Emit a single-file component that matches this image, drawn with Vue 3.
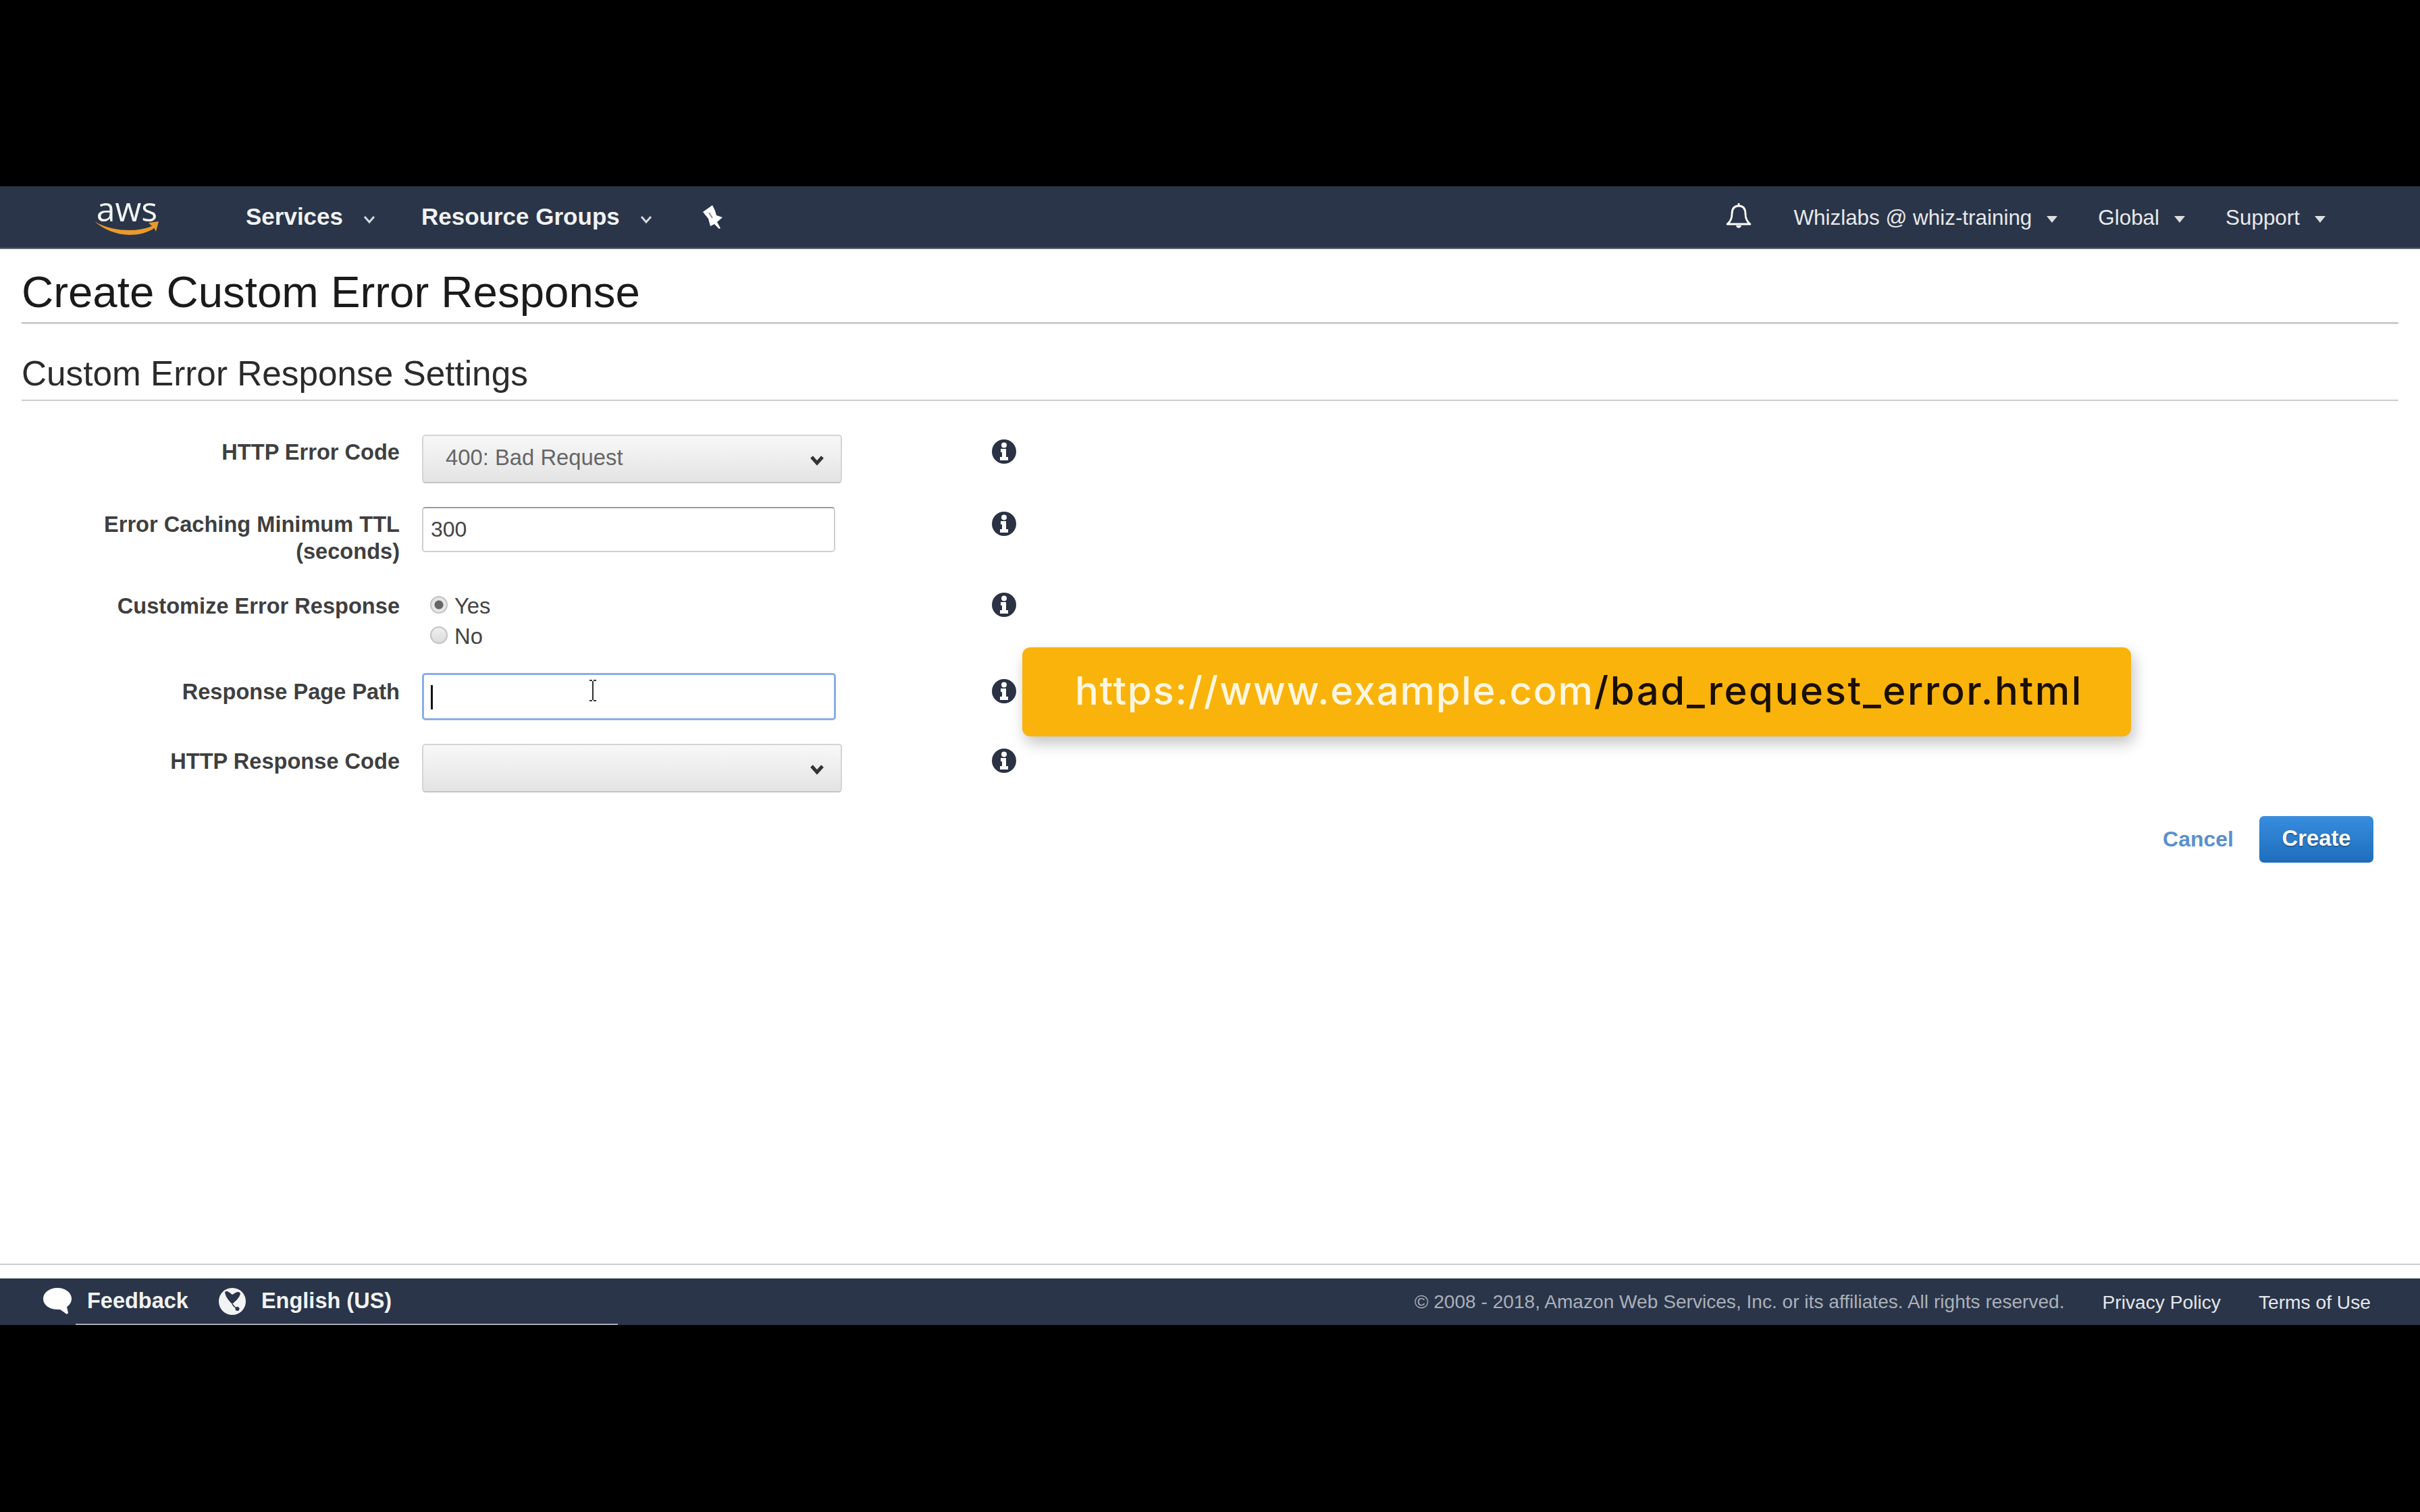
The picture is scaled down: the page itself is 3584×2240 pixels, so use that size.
<script setup>
const rows = [
  { label: ['HTTP Error Code'], type: 'select', value: '400: Bad Request', cls: 'r1' },
  { label: ['Error Caching Minimum TTL', '(seconds)'], type: 'input', value: '300', cls: 'r2' },
  { label: ['Customize Error Response'], type: 'radio', cls: 'r3' },
  { label: ['Response Page Path'], type: 'focus', cls: 'r4' },
  { label: ['HTTP Response Code'], type: 'select', value: '', cls: 'r5' }
]
</script>

<template>
  <div class="page">
    <header class="nav">
      <div class="logo">
        <span class="logo-text">aws</span>
        <svg class="smile" viewBox="0 0 96 20" width="96" height="20">
          <path d="M0 0 C16 10 36 13 52 13 C64 13 75 11 85 7 L80 2 L95 0 L91 15 L88.500 10 C78 17 65 20 52 20 C32 20 12 11 0 0 Z" fill="#e99a2d" />
        </svg>
      </div>
      <div class="menu services">Services</div>
      <svg class="vee" viewBox="0 0 18 12" width="18" height="12"><path d="M2 2 L9 10 L16 2" fill="none" stroke="#d5d8dd" stroke-width="3" /></svg>
      <div class="menu groups">Resource Groups</div>
      <svg class="vee" viewBox="0 0 18 12" width="18" height="12"><path d="M2 2 L9 10 L16 2" fill="none" stroke="#d5d8dd" stroke-width="3" /></svg>
      <svg class="pin" viewBox="0 0 30 36" width="30" height="36">
        <path d="M0 10 L14 0 L18 8 L20 15 L29 18 L21 25 L26 34 L24 35 L17 28 L11 31 L8 20 L4 15 Z" fill="#fff" />
        <path d="M9 11 L14 19" fill="none" stroke="#8b8f99" stroke-width="2" />
      </svg>
      <div class="right">
        <svg class="bell" viewBox="0 0 38 42" width="38" height="42">
          <path d="M19 2 V6 M19 6 C12 6 9 11 9 18 C9 25 6 30 2 33 H36 C32 30 29 25 29 18 C29 11 26 6 19 6 Z" fill="none" stroke="#fff" stroke-width="2.800" stroke-linejoin="round" />
          <path d="M15 35 C16 40 22 40 23 35 Z" fill="#fff" />
        </svg>
        <span class="acct whiz">Whizlabs @ whiz-training</span><i class="tri"></i>
        <span class="acct global">Global</span><i class="tri"></i>
        <span class="acct support">Support</span><i class="tri"></i>
      </div>
    </header>

    <main class="main">
      <h1 class="title">Create Custom Error Response</h1>
      <h2 class="section">Custom Error Response Settings</h2>

      <div class="form">
        <template v-for="row in rows" :key="row.cls">
          <div class="label" :class="row.cls">
            <div v-for="line in row.label" :key="line">{{ line }}</div>
          </div>
          <div class="control">
            <div v-if="row.type === 'select'" class="select">
              <span>{{ row.value }}</span>
              <svg class="chev" viewBox="0 0 24 16" width="24" height="16"><path d="M4 3 L12 12 L20 3" fill="none" stroke="#333" stroke-width="5" /></svg>
            </div>
            <div v-else-if="row.type === 'input'" class="input">{{ row.value }}</div>
            <div v-else-if="row.type === 'focus'" class="input focus">
              <span class="caret"></span>
              <svg class="ibeam" viewBox="0 0 14 32" width="14" height="32"><path d="M2 1 H6 M8 1 H12 M7 2 V30 M2 31 H6 M8 31 H12" fill="none" stroke="#333" stroke-width="2" /></svg>
            </div>
            <div v-else class="radios">
              <div class="radio-row"><span class="radio on"></span>Yes</div>
              <div class="radio-row"><span class="radio"></span>No</div>
            </div>
          </div>
          <div class="info" :class="row.cls">
            <svg viewBox="0 0 36 36" width="36" height="36">
              <circle cx="18" cy="18" r="18" fill="#2a3244" />
              <circle cx="18" cy="8.500" r="4" fill="#fff" />
              <path d="M13 14 H21 V26 H24 V31 H12 V26 H15 V19 H13 Z" fill="#fff" />
            </svg>
          </div>
        </template>
      </div>

      <div class="actions">
        <span class="cancel">Cancel</span>
        <span class="create">Create</span>
      </div>

      <div class="banner"><span class="light">https://www.example.com</span><span class="dark">/bad_request_error.html</span></div>

      <div class="foot-line"></div>
    </main>

    <footer class="footer">
      <svg class="bubble" viewBox="0 0 42 40" width="42" height="40">
        <path d="M21 0 C33 0 42 7 42 16 C42 22 38 26 35 28 L37 37 L35 39 L25 32 C12 33 0 27 0 16 C0 7 9 0 21 0 Z" fill="#fff" />
      </svg>
      <span class="foot-bold feedback">Feedback</span>
      <svg class="globe" viewBox="0 0 40 40" width="40" height="40">
        <circle cx="20" cy="20" r="20" fill="#f2f3f5" />
        <path d="M9 6 C13 3 17 8 20 10 C23 9 28 3 32 8 C31 15 24 20 20 24 C16 20 10 14 9 6 Z" fill="#2a3549" />
        <path d="M20 24 C22 27 24 29 27 31" fill="none" stroke="#2a3549" stroke-width="1.500" />
        <circle cx="27.500" cy="31" r="3" fill="#2a3549" />
      </svg>
      <span class="foot-bold lang">English (US)</span>
      <span class="copy">© 2008 - 2018, Amazon Web Services, Inc. or its affiliates. All rights reserved.</span>
      <span class="foot-link privacy">Privacy Policy</span>
      <span class="foot-link terms">Terms of Use</span>
      <i class="foot-streak"></i>
    </footer>
  </div>
</template>

<style scoped>
.page {
  width: 3584px;
  height: 2240px;
  box-sizing: border-box;
  padding: 276px 0 277px;
  background: #000;
  display: flex;
  flex-direction: column;
  font-family: "Liberation Sans", Arial, sans-serif;
  overflow: hidden;
}
.nav {
  height: 93px;
  flex: none;
  box-sizing: border-box;
  border-bottom: 2px solid #5c6370;
  background: #2a3549;
  display: flex;
  align-items: center;
  padding-left: 140px;
  color: #fff;
}
.logo {
  width: 96px;
  display: flex;
  flex-direction: column;
  align-items: center;
  margin-top: -4px;
}
.logo-text {
  font-family: "Open Sans", sans-serif;
  font-size: 50px;
  font-weight: 500;
  line-height: 36px;
  height: 36px;
  color: #f4f5f7;
}
.smile { margin-top: 1px; }
.menu {
  font-size: 35px;
  font-weight: 700;
  color: #f1f2f3;
  margin-top: -2px;
}
.services { margin-left: 128px; }
.groups { margin-left: 68px; }
.vee { margin-left: 30px; margin-top: 6px; }
.pin { margin-left: 75px; }
.right {
  margin-left: auto;
  padding-right: 140px;
  display: flex;
  align-items: center;
  height: 100%;
}
.bell { margin-right: 62px; margin-top: -4px; }
.acct {
  font-size: 31.400px;
  color: #e8e9ea;
  margin-top: 3px;
}
.tri {
  width: 0;
  height: 0;
  margin-left: 22px;
  margin-top: 6px;
  border-left: 8px solid transparent;
  border-right: 8px solid transparent;
  border-top: 10px solid #dcdee1;
}
.global, .support { margin-left: 60px; }

.main {
  flex: 1;
  position: relative;
  background: #fff;
  min-height: 0;
}
.title {
  margin: 0 32px;
  padding: 32px 0 12px;
  border-bottom: 3px solid #ccc;
  font-size: 65.400px;
  font-weight: 400;
  line-height: 64px;
  color: #1a1a1a;
}
.section {
  margin: 0 32px;
  padding: 49px 0 13px;
  border-bottom: 2px solid #ccc;
  font-size: 51.300px;
  font-weight: 400;
  line-height: 50px;
  color: #2b2b2b;
}
.form {
  display: grid;
  grid-template-columns: 559px 33px 622px 222px 36px;
  grid-template-rows: 107px 127px 119px 105px 74px;
  margin: 50px 0 0 33px;
}
.label {
  grid-column: 1;
  text-align: right;
  font-size: 32.600px;
  font-weight: 700;
  line-height: 40px;
  color: #3f3f3f;
  padding-top: 6px;
}
.label.r3 { padding-top: 0; }
.label.r4 { padding-top: 8px; }
.control { grid-column: 3; }
.select {
  height: 72px;
  box-sizing: border-box;
  border: 2px solid #d5d5d5;
  border-bottom-color: #c4c4c4;
  border-radius: 5px;
  background: linear-gradient(#f8f8f8, #e3e3e3);
  display: flex;
  align-items: center;
  justify-content: space-between;
  padding: 0 23px 4px 33px;
  font-size: 32.800px;
  color: #666;
}
.chev { margin-top: 8px; }
.input {
  position: relative;
  width: 612px;
  height: 67px;
  box-sizing: border-box;
  border: 2px solid #d0d0d0;
  border-top-color: #9c9c9c;
  border-radius: 5px;
  padding: 0 11px;
  font-size: 32px;
  line-height: 62px;
  color: #444;
  background: #fff;
}
.input.focus {
  width: 613px;
  height: 70px;
  border: 3px solid #8aaee6;
}
.caret {
  position: absolute;
  left: 10px;
  top: 15px;
  width: 3px;
  height: 36px;
  background: #111;
}
.ibeam {
  position: absolute;
  left: 243px;
  top: 7px;
}
.radios {
  display: flex;
  flex-direction: column;
  gap: 5px;
  padding: 0 0 0 12px;
}
.radio-row {
  height: 40px;
  display: flex;
  align-items: center;
  gap: 10px;
  font-size: 32.800px;
  color: #444;
}
.radio {
  width: 26px;
  height: 26px;
  box-sizing: border-box;
  margin-top: -4px;
  border: 2px solid #c2c2c2;
  border-radius: 50%;
  background: linear-gradient(#eee, #dcdcdc);
}
.radio.on {
  background: radial-gradient(circle, #666 0 6px, #e6e6e6 7px);
}
.info { grid-column: 5; padding-top: 7px; }
.info.r3 { padding-top: 0; }
.info.r4 { padding-top: 9px; }
.info svg { display: block; }
.actions {
  display: flex;
  justify-content: flex-end;
  align-items: center;
  gap: 38px;
  margin-top: 33px;
  padding-right: 69px;
}
.cancel {
  font-size: 32px;
  font-weight: 700;
  color: #5a90cf;
}
.create {
  width: 169px;
  height: 69px;
  box-sizing: border-box;
  border-radius: 7px;
  background: linear-gradient(#388dde, #1e6dbc);
  color: #fff;
  font-size: 32.800px;
  font-weight: 700;
  line-height: 66px;
  text-align: center;
  text-shadow: 0 1px 2px rgba(0, 0, 0, .5);
}
.banner {
  position: absolute;
  left: 1514px;
  top: 590px;
  width: 1642px;
  height: 132px;
  box-sizing: border-box;
  padding-left: 78px;
  border-radius: 12px;
  background: #f9b30b;
  box-shadow: 4px 10px 22px rgba(0, 0, 0, .24);
  font-family: Inter, sans-serif;
  font-size: 58px;
  font-weight: 500;
  line-height: 128px;
  white-space: nowrap;
}
.light { color: #fff6df; letter-spacing: 1.700px; }
.dark { color: #1a0f00; letter-spacing: 2.600px; }
.foot-line {
  position: absolute;
  left: 0;
  right: 0;
  top: 1503px;
  height: 2px;
  background: #ccc;
}
.footer {
  position: relative;
  height: 69px;
  flex: none;
  background: #2a3549;
  display: flex;
  align-items: center;
  padding-left: 64px;
  color: #fff;
}
.bubble { margin-top: -2px; }
.foot-bold {
  font-size: 32.500px;
  font-weight: 700;
  color: #f1f2f3;
  margin-top: -3px;
}
.feedback { margin-left: 23px; }
.globe { margin-left: 45px; margin-top: -2px; }
.lang { margin-left: 23px; }
.copy {
  margin-left: auto;
  margin-top: 1px;
  font-size: 28.100px;
  color: #aab0b9;
}
.foot-link {
  margin-top: 1px;
  font-size: 28.200px;
  color: #e4e6e9;
}
.privacy { margin-left: 56px; }
.terms { margin-left: 56px; margin-right: 73px; }
.foot-streak {
  position: absolute;
  left: 112px;
  width: 803px;
  bottom: 0;
  height: 2px;
  background: #a9adb6;
}
</style>

<style>
html, body { margin: 0; background: #000; }
</style>
